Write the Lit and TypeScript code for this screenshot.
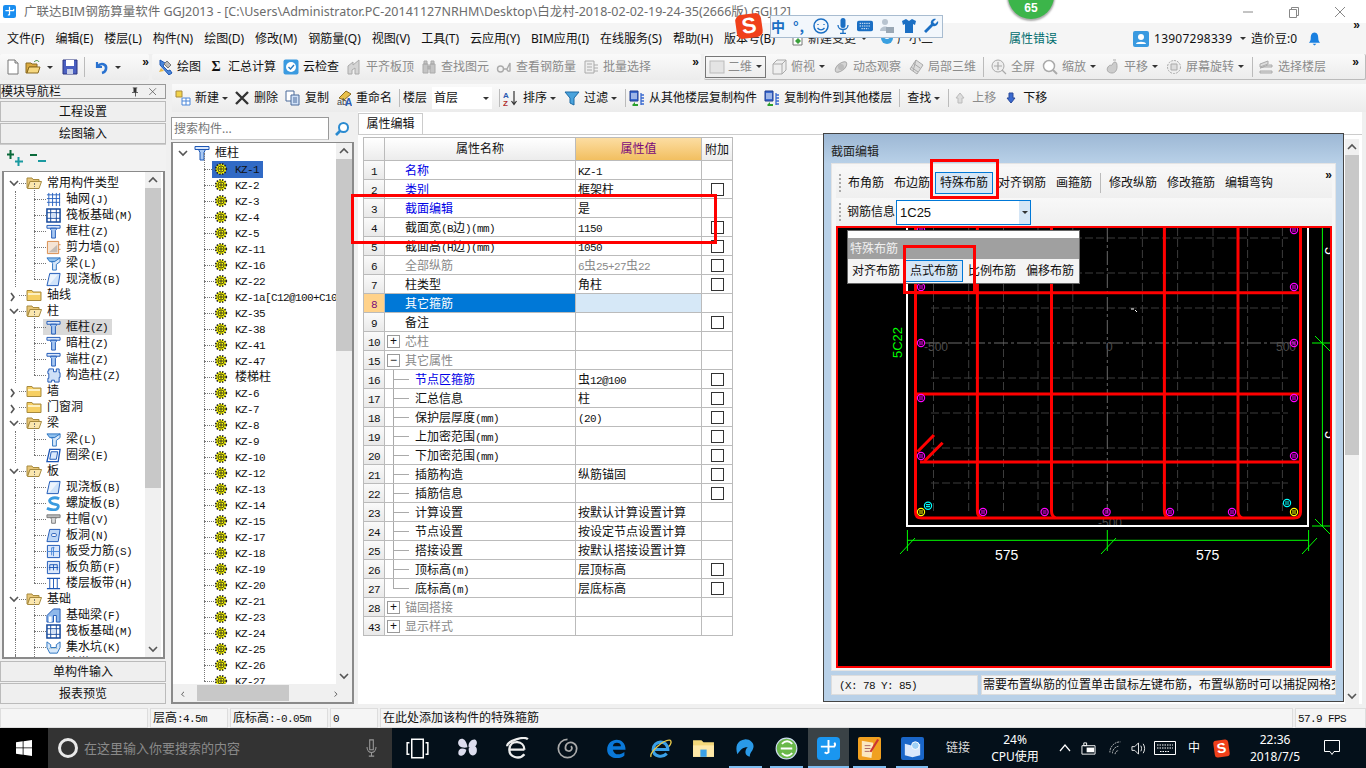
import { html, css, svg, LitElement } from 'lit';
import { customElement } from 'lit/decorators.js';

// latin runs in SimSun-style cells: 6px wide next to 12px CJK
const st = (s: string) =>
  s.split(/([\x20-\x7e]+)/).map((p, i) => (i % 2 ? html`<span class="la">${p}</span>` : p));

const B = '#1c56b5';
const P: Record<string, any> = {
  col: svg`<path d="M1 1.5h14v3H1z" fill="#dbe8fb" stroke="${B}"/><path d="M5 4.5h6V6l-1 1v8H6V7L5 6z" fill="#a9c9f3" stroke="${B}"/>`,
  folderO: svg`<path d="M1 3h5l1 1.5h6v2H4L1.5 13H1z" fill="#e8c778" stroke="#a78a3e"/><path d="M1.5 13.5L4 6.5h11.5L13 13.5z" fill="#fbe7ae" stroke="#a78a3e"/>`,
  folderC: svg`<path d="M1 3.5h5L7 5h8v8.5H1z" fill="#f6cf62" stroke="#a78a3e"/><path d="M2 6h12v2H2z" fill="#fdf0c0"/>`,
  axis: svg`<path d="M1 3h14M1 7h14M1 11h14M3 1v14M7 1v14M11 1v14M14.5 1v14" stroke="#2a62c0" fill="none"/>`,
  raft: svg`<path d="M1 1h14v14H1z" fill="#fff" stroke="#174a9c" stroke-width="1.6"/><path d="M1 5h14M1 11h14M5 1v14M11 1v14" stroke="#174a9c" fill="none"/><path d="M6 6h4v4H6z" fill="#cfe0f7"/>`,
  wall: svg`<path d="M1.5 1.5h12v13h-12z" fill="#f5e4d4" stroke="#d98a4a"/><path d="M3 13l9-8v8z" fill="#9a9a9a" opacity=".55"/><path d="M13.5 5h2M13.5 10h2" stroke="#d98a4a"/>`,
  beam: svg`<path d="M1 2h14l-3 4H4z" fill="#8fc0ee" stroke="#2a72c0"/><path d="M6 6h3l6-4v4l-4 3v6H7V8z" fill="#d7e8fa" stroke="#2a72c0"/>`,
  slab: svg`<path d="M4 1.5h11L13 14.5H1z" fill="#cfe3fa" stroke="${B}"/><path d="M4.5 3h8L4 13H2.5z" fill="#fff" opacity=".6"/>`,
  ring: svg`<path d="M4 1.5h11L13 14.5H1z" fill="#fff" stroke="${B}" stroke-width="1.4"/><path d="M5.5 4h7L11 12H4z" fill="#dbe8fb" stroke="${B}"/>`,
  puzzle: svg`<path d="M3 1h5v3h3V1h3v4h1v5h-1v5H9v-2H6v2H2v-4h1V6H2V3h1z" fill="#cfe0f7" stroke="${B}"/>`,
  spiral: svg`<path d="M14 3C8 0 1 4 5 7s9 1 8 5-8 3-12 1" fill="none" stroke="#3a9be0" stroke-width="3"/>`,
  cap: svg`<path d="M1 3h14v3H1z" fill="#bbb" stroke="#777"/><path d="M5 6h6l-1 2v4H6V8z" fill="#ddd" stroke="#777"/>`,
  hole: svg`<path d="M4 1.5h11L13 14.5H1z" fill="#bcd7f6" stroke="${B}"/><rect x="6" y="6" width="5" height="3" rx="1" fill="#fff" stroke="${B}"/>`,
  rebar: svg`<path d="M1.5 1.5h13v13h-13z" fill="#dbe8fb" stroke="${B}"/><path d="M1 8h14M8 3v10" stroke="#4a86d8"/><path d="M9 4h-3v8" stroke="#4a86d8" fill="none"/>`,
  neg: svg`<path d="M1.5 1.5h13v13h-13z" fill="#dbe8fb" stroke="${B}"/><path d="M3 8h10M4 5h8v6M4 5v6M8 5v6" stroke="${B}" fill="none"/>`,
  band: svg`<path d="M1 2.5h14M1 13.5h14" stroke="${B}" stroke-width="1.5"/><path d="M4 3v10M8 3v10M12 3v10" stroke="${B}"/>`,
  fbeam: svg`<path d="M1 15V8l7-7h7v14h-4V8H8v7z" fill="#8fb8ea" stroke="${B}"/><path d="M3 15V9h3v6z" fill="#fff"/>`,
  pit: svg`<path d="M1 2l4 3v3h6V5l4-3v6l-3 6H4L1 8z" fill="#d7e8fa" stroke="#2a72c0"/><path d="M3 9h10" stroke="#8aa" stroke-dasharray="1 1"/>`,
  stud: svg`<path d="M3 4h10v3H3z M6 7h4v8H6z" fill="#cfe0f7" stroke="${B}"/>`,
  gear: svg`<circle cx="8" cy="8" r="6" fill="#ff0" stroke="#222" stroke-width="2" stroke-dasharray="1.6 1.6"/><circle cx="8" cy="8" r="3.6" fill="#ff0" stroke="#222"/><path d="M5 8h6M8 5v6" stroke="#222"/>`,
  newdoc: svg`<path d="M3 1h7l3 3v11H3z" fill="#fff" stroke="#777"/><path d="M10 1v3h3" fill="#ddd" stroke="#777"/>`,
  open: svg`<path d="M1 4h5l1 1h5v3H4l-2 6H1z" fill="#d9a93f" stroke="#8a6a20"/><path d="M2 14l2-6h11l-2 6z" fill="#f6d880" stroke="#8a6a20"/><path d="M9 3c2-2 4-2 5 0" fill="none" stroke="#3a8a3a"/>`,
  save: svg`<path d="M1 1h14v14H1z" fill="#4a5fc0" stroke="#2a3580"/><path d="M4 1h8v6H4z" fill="#fff"/><path d="M5 10h6v5H5z" fill="#c8d0e8"/>`,
  undo: svg`<path d="M4 3v5h5" fill="none" stroke="#2a72d0" stroke-width="2.2"/><path d="M4.5 7.5C8 3 14 5 13 10c-.4 2-2 3.5-4 4" fill="none" stroke="#2a72d0" stroke-width="2.6"/>`,
  draw: svg`<path d="M3 1l5 3-2 3 5 5 2-1 2 3-3 2-9-10z" fill="#4a86d8" stroke="#1c56b5"/><path d="M2 13l5-1-3-3z" fill="#e8b94a"/><path d="M10 2l4 4-3 3-4-4z" fill="#bbb" stroke="#777"/>`,
  cloud: svg`<rect x="0.500" y="0.500" width="15" height="15" rx="2" fill="#3a9ae0"/><circle cx="8" cy="8" r="5" fill="#fff"/><path d="M5.500 8l2 2 3.500-4" fill="none" stroke="#2a7ac0" stroke-width="1.4"/>`,
  dAlign: svg`<path d="M2 15V7l5-4v3l6-5v14H9V9l-3 2v4z" fill="#d4d4d4" stroke="#aaa"/>`,
  dFind: svg`<path d="M2 5h5v9H2zM9 5h5v9H9zM3 2h3v3H3zM10 2h3v3h-3zM7 7h2v3H7z" fill="#c4c4c4" stroke="#aaa"/>`,
  dView: svg`<circle cx="4.5" cy="10" r="3" fill="none" stroke="#aaa" stroke-width="1.4"/><path d="M8 10h3M11 10l3-6v8a2 2 0 01-3-2" fill="none" stroke="#aaa" stroke-width="1.4"/>`,
  dBatch: svg`<path d="M2 2h9v12H2z" fill="#eee" stroke="#aaa"/><path d="M4 5h5M4 8h5M4 11h5M11 6h4M11 9h4M11 12h4" stroke="#aaa"/>`,
  dBox: svg`<path d="M2 5l4-4h9v10l-4 4H2z" fill="#eee" stroke="#aaa"/><path d="M2 5h9v10M11 5l4-4" fill="none" stroke="#aaa"/>`,
  dOrbit: svg`<ellipse cx="8" cy="8" rx="7" ry="3.5" transform="rotate(-40 8 8)" fill="#d4d4d4" stroke="#aaa"/><circle cx="8" cy="8" r="3" fill="#bbb"/>`,
  dCube: svg`<path d="M8 1l7 5-6 9-7-5z" fill="#ddd" stroke="#aaa"/><path d="M5 4l7 5M3 8l7 5M8 1L5 12" stroke="#aaa"/>`,
  dFull: svg`<circle cx="7" cy="7" r="6" fill="#eee" stroke="#aaa"/><path d="M7 3v8M3 7h8M11 11l4 4" stroke="#aaa" stroke-width="1.2"/>`,
  dZoom: svg`<circle cx="7" cy="7" r="5.5" fill="#fff" stroke="#aaa" stroke-width="1.5"/><path d="M11 11l4 4" stroke="#aaa" stroke-width="2"/>`,
  dPan: svg`<path d="M4 8c2-3 3-1 4-2s1-3 3-3 2 3 2 5-1 6-5 6-6-3-4-6z" fill="#ccc" stroke="#aaa"/><path d="M9 1h3" stroke="#aaa"/>`,
  dRot: svg`<circle cx="8" cy="8" r="6.5" fill="#eee" stroke="#aaa" stroke-dasharray="2 1"/><path d="M5 5h6v6H5z" fill="#ddd" stroke="#aaa"/>`,
  dFloor: svg`<path d="M2 5l8-3v3l-8 3zM2 9l8-3h4v2H6zM2 12h12v2H2z" fill="#ddd" stroke="#aaa"/>`,
  d2: svg`<rect x="1" y="2" width="14" height="12" fill="#e4e4e4" stroke="#bbb"/>`,
  add: svg`<path d="M1 1h6v6H1z" fill="#f2d34a" stroke="#a78a3e"/><path d="M7 8h8v7H7z" fill="#fff" stroke="#4a86d8"/><path d="M7 11h8M11 8v7" stroke="#4a86d8"/>`,
  del: svg`<path d="M2 2l12 12M14 2L2 14" stroke="#333" stroke-width="2.4"/>`,
  copy: svg`<path d="M1 1h8v10H1z" fill="#fff" stroke="#4a6a9a"/><path d="M6 5h8v10H6z" fill="#cfe0f7" stroke="#4a6a9a"/><path d="M8 8h4M8 10h4M8 12h4" stroke="#4a6a9a"/>`,
  rename: svg`<path d="M3 8l7-7 5 3-7 6z" fill="#e8c04a" stroke="#8a6a20"/><text x="1" y="15" font-size="9" fill="#444" font-family="Liberation Sans">ab</text><text x="9" y="16" font-size="10" font-weight="700" fill="#2a5ab0" font-family="Liberation Sans">A</text>`,
  sort: svg`<text x="0" y="7.5" font-size="8" font-weight="700" fill="#2a5ab0" font-family="Liberation Sans">A</text><text x="0" y="15.5" font-size="8" font-weight="700" fill="#b03030" font-family="Liberation Sans">Z</text><path d="M11 1v13M8.5 11l2.5 3.5 2.5-3.5" fill="none" stroke="#333" stroke-width="1.2"/>`,
  filter: svg`<path d="M1 2h14l-5 6v7l-4-2V8z" fill="#4aa3dc" stroke="#1c6aa5"/>`,
  fromF: svg`<path d="M1 1h8v10H1z" fill="#3a6ad0" stroke="#1c3a90"/><path d="M2 4h6M2 6h6M2 8h6" stroke="#fff"/><path d="M12 5h3M12 8h3M12 11h3M12 14h3M12 3v12" stroke="#3a6ad0" stroke-width="1.3"/><path d="M3 15l3-3v2h3v2H6v2z" fill="#2ca02c"/>`,
  up: svg`<path d="M8 3l4 5h-2v5H6V8H4z" fill="#ddd" stroke="#bbb"/>`,
  down: svg`<path d="M8 13L4 8h2V3h4v5h2z" fill="#3a6ad0" stroke="#2a4a9a"/>`,
  search: svg`<circle cx="9.5" cy="6.5" r="4.5" fill="#fff" stroke="#2a8ad0" stroke-width="2"/><path d="M6 10l-4 4" stroke="#2a8ad0" stroke-width="2.6"/>`,
  plus: svg`<path d="M3.500 0v9M0 4.500h7" stroke="#0a6a3a" stroke-width="2"/><path d="M11.500 7v9M8 11.500h8" stroke="#1a9aa0" stroke-width="2"/>`,
  minus: svg`<path d="M0 5h7" stroke="#0a6a3a" stroke-width="2"/><path d="M8 11h8" stroke="#1a9aa0" stroke-width="2"/>`,
  pin: svg`<path d="M5 2h6v1h-1v5h2v1H9v5H8V9H4V8h2V3H5z" fill="#333"/>`,
  x: svg`<path d="M3 3l9 9M12 3l-9 9" stroke="#555" fill="none"/>`,
  doc: svg`<path d="M3 2h9v12H3z" fill="#fff" stroke="#777"/><path d="M5 10l3-3 3 3-3 3z" fill="#3aa03a"/>`,
  cup: svg`<path d="M2 3h12v4a6 6 0 01-12 0z" fill="#3aa0e0"/><path d="M5 6c1 2 5 2 6 0" fill="none" stroke="#fff"/>`,
  user: svg`<rect x="1" y="1" width="16" height="16" rx="2" fill="#3a9ae0"/><circle cx="9" cy="7" r="3" fill="#fff"/><path d="M4 14c0-3 10-3 10 0z" fill="#fff"/>`,
  bell: svg`<path d="M8 1c3 0 4 3 4 6s1 4 2 5H2c1-1 2-2 2-5s1-6 4-6z" fill="#1a80e0"/><path d="M6 13h4l-2 2z" fill="#1a80e0"/>`,
};
const ic = (n: string) => html`<svg class="ic" viewBox="0 0 16 16">${P[n]}</svg>`;
const arrow = html`<i class="arr"></i>`;
const more = html`<span class="more">»</span>`;
const chev = (d: string) =>
  html`<svg class="chev" viewBox="0 0 10 6"><path d="${d}" fill="none" stroke="#555" stroke-width="1.6"/></svg>`;
const CUP = 'M1 5l4-4 4 4';
const CDN = 'M1 1l4 4 4-4';

type T = [string, string, boolean?];
const row1: T[] = [['draw', '绘图'], ['sig', '汇总计算'], ['cloud', '云检查']];
const row1d: T[] = [['dAlign', '平齐板顶'], ['dFind', '查找图元'], ['dView', '查看钢筋量'], ['dBatch', '批量选择']];

type N = [number, string, string, string?];
// level, icon, label, selected
const navTree: N[] = [
  [0, 'folderO', '常用构件类型'], [1, 'axis', '轴网(J)'], [1, 'raft', '筏板基础(M)'], [1, 'col', '框柱(Z)'],
  [1, 'wall', '剪力墙(Q)'], [1, 'beam', '梁(L)'], [1, 'slab', '现浇板(B)'], [0, 'folderC', '轴线'],
  [0, 'folderO', '柱'], [1, 'col', '框柱(Z)', 's'], [1, 'col', '暗柱(Z)'], [1, 'col', '端柱(Z)'], [1, 'puzzle', '构造柱(Z)'],
  [0, 'folderC', '墙'], [0, 'folderC', '门窗洞'], [0, 'folderO', '梁'], [1, 'beam', '梁(L)'], [1, 'ring', '圈梁(E)'],
  [0, 'folderO', '板'], [1, 'slab', '现浇板(B)'], [1, 'spiral', '螺旋板(B)'], [1, 'cap', '柱帽(V)'], [1, 'hole', '板洞(N)'],
  [1, 'rebar', '板受力筋(S)'], [1, 'neg', '板负筋(F)'], [1, 'band', '楼层板带(H)'], [0, 'folderO', '基础'],
  [1, 'fbeam', '基础梁(F)'], [1, 'raft', '筏板基础(M)'], [1, 'pit', '集水坑(K)'], [1, 'stud', '柱墩(Y)'],
];
const kz = ['KZ-1', 'KZ-2', 'KZ-3', 'KZ-4', 'KZ-5', 'KZ-11', 'KZ-16', 'KZ-22', 'KZ-1a[C12@100+C10', 'KZ-35', 'KZ-38', 'KZ-41',
  'KZ-47', '楼梯柱', 'KZ-6', 'KZ-7', 'KZ-8', 'KZ-9', 'KZ-10', 'KZ-12', 'KZ-13', 'KZ-14', 'KZ-15', 'KZ-17', 'KZ-18', 'KZ-19',
  'KZ-20', 'KZ-21', 'KZ-23', 'KZ-24', 'KZ-25', 'KZ-26', 'KZ-27'];

// no, name, value, checkbox, style: b blue, g grey, s selected, sub child row, + / - expander
const rows: [string, string, string, boolean, string][] = [
  ['1', '名称', 'KZ-1', false, 'b'], ['2', '类别', '框架柱', true, 'b'], ['3', '截面编辑', '是', false, 'b'],
  ['4', '截面宽(B边)(mm)', '1150', true, ''], ['5', '截面高(H边)(mm)', '1050', true, ''],
  ['6', '全部纵筋', '6虫25+27虫22', true, 'g'], ['7', '柱类型', '角柱', true, ''], ['8', '其它箍筋', '', false, 's'],
  ['9', '备注', '', true, ''], ['10', '芯柱', '', false, 'g +'], ['15', '其它属性', '', false, 'g -'],
  ['16', '节点区箍筋', '虫12@100', true, 'b sub'], ['17', '汇总信息', '柱', true, 'sub'], ['18', '保护层厚度(mm)', '(20)', true, 'sub'],
  ['19', '上加密范围(mm)', '', true, 'sub'], ['20', '下加密范围(mm)', '', true, 'sub'], ['21', '插筋构造', '纵筋锚固', true, 'sub'],
  ['22', '插筋信息', '', true, 'sub'], ['23', '计算设置', '按默认计算设置计算', false, 'sub'], ['24', '节点设置', '按设定节点设置计算', false, 'sub'],
  ['25', '搭接设置', '按默认搭接设置计算', false, 'sub'], ['26', '顶标高(m)', '层顶标高', true, 'sub'], ['27', '底标高(m)', '层底标高', true, 'sub last'],
  ['28', '锚固搭接', '', false, 'g +'], ['43', '显示样式', '', false, 'g +'],
];

const gx = [933.5, 968.7, 1003.5, 1038, 1072.8, 1142.4, 1177.6, 1213, 1247.6, 1282.4];
const gy = [238, 273, 308, 378, 413, 448, 483];
const vbars = [977.4, 1051.5, 1164.4, 1238];
const bars: [number, number, string][] = [
  [921, 230, '#f0f'], [1294, 230, '#f0f'], [921, 287, '#f0f'], [1294, 287, '#f0f'], [921, 343, '#f0f'], [1294, 343, '#f0f'],
  [921, 398, '#f0f'], [1294, 398, '#f0f'], [921, 456, '#f0f'], [1294, 456, '#f0f'], [983, 512, '#f0f'], [1044.6, 512, '#f0f'],
  [1106.6, 512, '#f0f'], [1170, 512, '#f0f'], [1232, 512, '#f0f'], [921, 512, '#ff0'], [1294, 512, '#ff0'],
  [928, 505.7, '#0ff'], [1287, 503, '#0ff'],
];

@customElement('app-root')
export class AppRoot extends LitElement {
  private drawing() {
    return html`<svg class="cad" viewBox="836 226 496 442">
      <g stroke="#3c3c3c" stroke-dasharray="8 3" fill="none">
        ${gx.map((x) => svg`<path d="M${x} 228V513"/>`)}
        ${gy.map((y) => svg`<path d="M931 ${y}H1288"/>`)}
        <path d="M1107.3 228V513M925 343H1295" stroke="#6a6a6a" stroke-dasharray="14 3 3 3"/>
      </g>
      <g fill="#4c4c4c" font-family="Liberation Sans" font-size="12">
        <text x="924" y="351">-500</text><text x="1106" y="351">0</text><text x="1276" y="351">500</text><text x="1098" y="527">-500</text>
      </g>
      <path d="M907 220V526H1308V220" fill="none" stroke="#fff" stroke-width="2"/>
      <g stroke="#f00" stroke-width="3" fill="none">
        <path d="M915.5 226V512q0 6 6 6H1294q6.500 0 6.500-6V226"/>
        ${vbars.map((x) => svg`<path d="M${x} 226V511q0 5 4 7"/>`)}
        <path d="M916 292.700H1299M916 394H1299M920 462H1299"/>
        <path d="M917.500 451.700L934 435M924.500 461L942.600 442.700"/>
      </g>
      ${bars.map(([x, y, c]) => svg`<g fill="none" stroke="${c}" stroke-width="1.2"><circle cx="${x}" cy="${y}" r="3.600"/><path d="M${x - 2} ${y - 1}h4M${x - 2} ${y + 1}h4"/></g>`)}
      <g stroke="#0f0" fill="none">
        <path d="M907.400 540.300H1308.600M907.400 530V551M1107.300 530V551M1308.600 530V551"/>
        <path d="M900 554L915 538M1101 554L1116 538M1302 554L1317 538"/>
        <path d="M1322.400 226V526M1312 526H1332M1312 343H1332M1315 336L1330 351M1315 519L1330 534"/>
      </g>
      <g fill="#fff" font-family="Liberation Sans" font-size="14">
        <text x="995" y="560">575</text><text x="1196" y="560">575</text>
        <text transform="translate(1325 247) rotate(90)">5</text><text transform="translate(1325 431) rotate(90)">5</text>
      </g>
      <text transform="translate(902 358) rotate(-90)" fill="#0f0" font-family="Liberation Sans" font-size="13">5C22</text>
      <path d="M1131 309h3M1135 310l2 2" stroke="#fff"/>
    </svg>`;
  }

  private task(cls: string, body: any) {
    return html`<div class="slot ${cls}">${body}</div>`;
  }

  render() {
    return html`
      <div class="title">
        <svg class="appic" viewBox="0 0 16 16"><rect width="16" height="16" rx="2.500" fill="#1a8ef0"/><path d="M8 2v10a2 2 0 01-2 0M3 7h10a2 2 0 000-2" fill="none" stroke="#fff" stroke-width="1.500"/></svg>
        <span class="ttxt">广联达BIM钢筋算量软件 GGJ2013 - [C:\\Users\\Administrator.PC-20141127NRHM\\Desktop\\白龙村-2018-02-02-19-24-35(2666版).GGJ12]</span>
        <div class="wc">
          <svg viewBox="0 0 12 12"><path d="M1 6h10" stroke="#888"/></svg>
          <svg viewBox="0 0 12 12"><path d="M1.500 3.500h7v8h-7zM3.500 3.500v-2h7v8h-2" fill="none" stroke="#888"/></svg>
          <svg viewBox="0 0 12 12"><path d="M1 1l10 10M11 1L1 11" stroke="#888"/></svg>
        </div>
      </div>

      <div class="menu">
        ${['文件(F)', '编辑(E)', '楼层(L)', '构件(N)', '绘图(D)', '修改(M)', '钢筋量(Q)', '视图(V)', '工具(T)', '云应用(Y)', 'BIM应用(I)', '在线服务(S)', '帮助(H)', '版本号(B)'].map((m) => html`<span>${m}</span>`)}
        <span class="mi first">${ic('doc')}新建变更</span><i class="arr"></i>
        <span class="mi">${ic('cup')}广小二</span>
        <span class="err">属性错误</span>
        <span class="acct"><svg class="ic" viewBox="0 0 18 18">${P.user}</svg>13907298339<i class="arr"></i></span>
        <span class="bean">造价豆:0</span>
        <span class="bell">${ic('bell')}</span>
        ${more}
      </div>

      <div class="tools">
        <div class="seg a">
          ${ic('newdoc')}${ic('open')}${arrow}<span class="sp"></span>${ic('save')}<b class="sep"></b>${ic('undo')}${arrow}${more}
        </div>
        <div class="seg b">
          ${row1.map(([i, t]) => html`<span class="it">${i === 'sig' ? html`<span class="sig">Σ</span>` : ic(i)}${t}</span>`)}
          ${row1d.map(([i, t]) => html`<span class="it off">${ic(i)}${t}</span>`)}
          ${more}
        </div>
        <div class="seg c">
          <span class="combo2">${ic('d2')}<span>二维</span>${arrow}</span>
          <span class="it off">${ic('dBox')}俯视${arrow}</span>
          <span class="it off">${ic('dOrbit')}动态观察</span>
          <span class="it off">${ic('dCube')}局部三维</span>
          <b class="sep"></b>
          <span class="it off">${ic('dFull')}全屏</span>
          <span class="it off">${ic('dZoom')}缩放${arrow}</span>
          <span class="it off">${ic('dPan')}平移${arrow}</span>
          <span class="it off">${ic('dRot')}屏幕旋转${arrow}</span>
          <b class="sep tight"></b>
          <span class="it off floor">${ic('dFloor')}选择楼层</span>
          ${more}
        </div>
      </div>

      <div class="main">
        <div class="nav">
          <div class="navhead"><span>模块导航栏</span>${ic('pin')}${ic('x')}</div>
          <div class="btn">工程设置</div>
          <div class="btn">绘图输入</div>
          <div class="strip">${ic('plus')}${ic('minus')}</div>
          <div class="pane navtree">
            <div class="list">
              ${navTree.map(([l, i, t, s]) => html`<div class="node l${l}">
                ${s ? html`<i class="selbg"></i>` : ''}
                ${l === 0
                  ? html`<span class="tog">${chev(i === 'folderO' ? CDN : 'M2 1l3 4-3 4')}</span><i class="dot h"></i>`
                  : html`<i class="dot h child"></i>`}
                ${ic(i)}<span class="lb">${st(t)}</span></div>`)}
            </div>
            <div class="vs nv"><div class="end">${chev(CUP)}</div><div class="track"><div class="th"></div></div><div class="end">${chev(CDN)}</div></div>
          </div>
          <div class="btn foot">单构件输入</div>
          <div class="btn">报表预览</div>
        </div>

        <div class="split">
          <div class="tb2">
            <span class="it">${ic('add')}新建${arrow}</span>
            <span class="it x">${ic('del')}删除</span>
            <span class="it">${ic('copy')}复制</span>
            <span class="it">${ic('rename')}重命名</span>
            <b class="sep"></b>
            <span class="fl">楼层</span>
            <span class="combo3">首层${arrow}</span>
            <b class="sep"></b>
            <span class="it">${ic('sort')}排序${arrow}</span>
            <span class="it">${ic('filter')}过滤${arrow}</span>
            <b class="sep"></b>
            <span class="it">${ic('fromF')}从其他楼层复制构件</span>
            <span class="it">${ic('fromF')}复制构件到其他楼层</span>
            <b class="sep"></b>
            <span class="it find">查找${arrow}</span>
            <b class="sep"></b>
            <span class="it off">${ic('up')}上移</span>
            <span class="it">${ic('down')}下移</span>
          </div>
          <div class="work">
            <div class="comp">
              <div class="srow"><div class="sbox">搜索构件...</div>${ic('search')}</div>
              <div class="pane ctree">
                <div class="clist">
                  <div class="croot"><span class="tog">${chev(CDN)}</span>${ic('col')}<span>框柱</span></div>
                  ${kz.map((k, i) => html`<div class="cn"><i class="dot h"></i>${ic('gear')}<span class="lb ${i === 0 ? 'hl' : ''}">${st(k)}</span></div>`)}
                </div>
                <div class="vs cv"><div class="end">${chev(CUP)}</div><div class="track"><div class="th"></div></div><div class="end">${chev(CDN)}</div></div>
                <div class="hs"><span>${chev('M5 1L1 5l4 4')}</span><div class="hth"></div><span class="he">${chev('M1 1l4 4-4 4')}</span></div>
              </div>
            </div>

            <div class="props">
              <div class="tab">属性编辑</div>
              <div class="body">
                <div class="grid">
                  <div class="row head"><div class="c n"></div><div class="c nm">属性名称</div><div class="c vl">属性值</div><div class="c ad">附加</div></div>
                  ${rows.map(([no, name, val, cb, f]) => {
                    const fl = f.split(' ');
                    const exp = fl.includes('+') ? '+' : fl.includes('-') ? '−' : '';
                    return html`<div class="row ${f}">
                      <div class="c n">${st(no)}</div>
                      <div class="c nm">${exp ? html`<span class="ex">${exp}</span>` : ''}${st(name)}</div>
                      <div class="c vl">${st(val)}</div>
                      <div class="c ad">${cb ? html`<i class="cb"></i>` : ''}</div>
                    </div>`;
                  })}
                </div>
                <div class="vs rv"><div class="end">${chev(CUP)}</div><div class="track"><div class="th"></div></div><div class="end">${chev(CDN)}</div></div>
              </div>
            </div>
          </div>
        </div>
      </div>

      <div class="status">
        <div class="st s0"></div>
        <div class="st s1">${st('层高:4.5m')}</div>
        <div class="st s2">${st('底标高:-0.05m')}</div>
        <div class="st s3">${st('0')}</div>
        <div class="st s4">在此处添加该构件的特殊箍筋</div>
        <div class="st s5">${st('57.9 FPS')}</div>
      </div>

      <div class="taskbar">
        <div class="start"><svg viewBox="0 0 16 16"><path d="M0 2.300L6.700 1.300V7.500H0zM7.500 1.200L16 0V7.500H7.500zM0 8.300H6.700V14.700L0 13.700zM7.500 8.300H16V16L7.500 14.800z" fill="#fff"/></svg></div>
        <div class="sbar">
          <i class="cortana"></i><span>在这里输入你要搜索的内容</span>
          <svg class="mic" viewBox="0 0 12 20"><path d="M4 1h4v11H4zM1 9c0 8 10 8 10 0M6 15v4M3 19h6" fill="none" stroke="#999" stroke-width="1.200"/></svg>
        </div>
        ${this.task('w50', html`<svg viewBox="0 0 20 20"><path d="M5 2h10v16H5zM3 5H1v10h2M17 5h2v10h-2" fill="none" stroke="#fff" stroke-width="1.300"/></svg>`)}
        ${this.task('w50', html`<svg viewBox="0 0 20 20"><path d="M10 9C5 10 1 8 2 4s7-4 8 5zM11 10c5-5 8-1 7 3s-7 5-7-3zM9 11c-1 6-7 7-7 3s3-5 7-3zM11 9c-1-6 6-9 7-5s-3 6-7 5z" fill="#dde"/></svg>`)}
        ${this.task('w50', html`<svg viewBox="0 0 20 20"><path d="M3 11h13M16 11c0-8-12-9-13-1s9 10 13 5M1 8c0-5 15-9 18-6" fill="none" stroke="#eee" stroke-width="2"/></svg>`)}
        ${this.task('w50', html`<svg viewBox="0 0 20 20"><path d="M10 2a8 8 0 108 8c0-4-4-6-7-5s-4 6-1 7 5-2 3-4" fill="none" stroke="#aaa" stroke-width="1.500"/></svg>`)}
        ${this.task('w50', html`<svg viewBox="0 0 20 20"><path d="M3 11h14c0-12-16-11-16 0 0 8 11 9 15 5v-3c-4 3-9 3-10-2" fill="#0a78d8"/><path d="M6 8c0-4 7-4 7 0z" fill="#041018"/></svg>`)}
        ${this.task('w36', html`<svg viewBox="0 0 22 20"><path d="M5 11h13c0-10-14-9-14 0 0 7 9 8 13 4" fill="none" stroke="#3aa0e8" stroke-width="3"/><path d="M2 18C0 14 14 1 20 2c2 1 1 4-1 6" fill="none" stroke="#e8c84a" stroke-width="1.300"/></svg>`)}
        ${this.task('w50', html`<svg viewBox="0 0 22 20"><path d="M1 2h8l2 2h10v14H1z" fill="#f4d87a"/><path d="M1 7h20v11H1z" fill="#ffe9a8"/><path d="M8 11h6v7H8z" fill="#3aa0e8"/></svg>`)}
        ${this.task('w35 u g6', html`<svg viewBox="0 0 20 20"><path d="M10 2c-8 1-9 7-7 13 3-4 4-6 9-6-3 2-3 8 2 8-1-3 3-5 3-9 0-3-3-6-7-6z" fill="#2a9ae8"/></svg>`)}
        ${this.task('w35 u g4', html`<svg viewBox="0 0 20 20"><circle cx="10" cy="10" r="9" fill="#6ab84a" stroke="#cde"/><path d="M5 10h10M6 6c3-3 6-3 9 0M6 14c3 3 6 3 9 0" fill="none" stroke="#fff" stroke-width="1.600"/></svg>`)}
        ${this.task('w41 act u', html`<svg viewBox="0 0 24 24"><rect width="24" height="24" rx="4" fill="#1a96f0"/><path d="M12 3v13a3 3 0 01-4 0M4 10h14a3 3 0 000-4" fill="none" stroke="#fff" stroke-width="2"/></svg>`)}
        ${this.task('w35 u g3l g8', html`<svg viewBox="0 0 24 24"><rect width="24" height="24" rx="2" fill="#f0a020"/><path d="M4 4l12 2-2 16-10-2z" fill="#fbe8c0"/><path d="M7 9h6M7 12h6M7 15h5" stroke="#a66"/><path d="M20 2l2 1-8 13-2-1z" fill="#c33"/></svg>`)}
        ${this.task('w34 u', html`<svg viewBox="0 0 24 24"><rect width="24" height="24" rx="2" fill="#1a66c8"/><path d="M4 7l8 2 8-2v12l-8 2-8-2z" fill="#dbe8fb"/><circle cx="15" cy="9" r="4" fill="#9fd0f5" stroke="#fff"/></svg>`)}
        <span class="link">链接</span>
        <div class="cpu"><span>24%</span><span>CPU使用</span></div>
        <svg class="tray t1" viewBox="0 0 12 8"><path d="M1 7l5-6 5 6" fill="none" stroke="#fff" stroke-width="1.200"/></svg>
        <svg class="tray t2" viewBox="0 0 16 16"><path d="M1 5h14v9H1zM3 2h3v3H3z" fill="none" stroke="#fff"/><path d="M6 7h8v5H6z" fill="#fff"/></svg>
        <svg class="tray t3" viewBox="0 0 16 16"><path d="M1 13a12 12 0 0112-12M4 14a8 8 0 017-8M7 15a4 4 0 014-4" fill="none" stroke="#ddd" stroke-dasharray="2 1"/></svg>
        <svg class="tray t4" viewBox="0 0 16 16"><path d="M1 6h3l4-4v12l-4-4H1zM10.500 5c1 2 1 4 0 6M13 3c2 3 2 7 0 10" fill="none" stroke="#eee"/></svg>
        <svg class="tray t5" viewBox="0 0 22 14"><path d="M.5.500h21v13H.500z" fill="none" stroke="#fff"/><path d="M3 4h16M3 7h16M6 10.500h10" stroke="#fff" stroke-dasharray="1.500 1"/></svg>
        <span class="zh">中</span>
        <span class="sg small">S</span>
        <div class="clock"><span>22:36</span><span>2018/7/5</span></div>
        <svg class="notif" viewBox="0 0 16 16"><path d="M.5.500h15v11H10l-2 3-2-3H.500z" fill="none" stroke="#fff"/></svg>
      </div>

      <div class="under">
        <div class="dlg">
          <div class="dtitle">截面编辑</div>
          <div class="dframe">
            <div class="dbar">
              <i class="grip"></i>
              <span>布角筋</span><span>布边筋</span><span class="on">特殊布筋</span><span>对齐钢筋</span><span>画箍筋</span>
              <b class="sep"></b>
              <span>修改纵筋</span><span>修改箍筋</span><span>编辑弯钩</span>
              ${more}
            </div>
            <div class="dbar r2">
              <i class="grip"></i><span>钢筋信息</span>
              <div class="rc">1C25<u>${arrow}</u></div>
            </div>
            <div class="canvas">${this.drawing()}</div>
          </div>
          <div class="dstat">
            <div class="xy">${st('(X: 78 Y: 85)')}</div>
            <div class="msg">需要布置纵筋的位置单击鼠标左键布筋，布置纵筋时可以捕捉网格交点</div>
          </div>
        </div>

        <div class="float">
          <div class="ftop"></div>
          <div class="ftitle">特殊布筋</div>
          <div class="fbody"><span>对齐布筋</span><span class="on">点式布筋</span><span>比例布筋</span><span>偏移布筋</span></div>
        </div>

        <i class="mark m1"></i><i class="mark m2"></i><i class="mark m3"></i>

        <div class="badge"><span>65</span></div>

        <div class="ime">
          <span class="sg">S</span>
          <div class="imebar">
            <b>中</b><b class="pn">°,</b>
            <svg viewBox="0 0 16 16"><circle cx="8" cy="8" r="7" fill="none" stroke="#1a6fc4" stroke-width="1.500"/><path d="M5 6v1M11 6v1M4.500 10c2 2.500 5 2.500 7 0" fill="none" stroke="#1a6fc4" stroke-width="1.300"/></svg>
            <svg viewBox="0 0 16 16"><rect x="5.500" y="0" width="5" height="10" rx="2.500" fill="#1a6fc4"/><path d="M3 7c0 6 10 6 10 0M8 12v3M5 15.500h6" fill="none" stroke="#1a6fc4" stroke-width="1.300"/></svg>
            <svg viewBox="0 0 18 16"><rect y="2" width="18" height="12" rx="2" fill="#1a6fc4"/><path d="M3 5h12M3 8h12M5 11h8" stroke="#fff" stroke-dasharray="1.500 1"/></svg>
            <svg viewBox="0 0 16 16"><circle cx="6" cy="4" r="3" fill="#b8c4d0"/><path d="M1 13c0-6 10-6 10 0z" fill="#b8c4d0"/><path d="M7 9h8v6H7z" fill="#9aa8b5"/></svg>
            <svg viewBox="0 0 16 16"><path d="M5 1L1 3l1 4 2-1v9h8V6l2 1 1-4-4-2-3 2z" fill="#1a6fc4"/></svg>
            <svg viewBox="0 0 16 16"><path d="M15 3l-3 3-2-2 3-3c-3-1-6 2-5 5l-7 7 2 2 7-7c3 1 6-2 5-5z" fill="#1a6fc4"/></svg>
          </div>
        </div>
      </div>
    `;
  }

  static styles = css`
    :host {
      display: block;
      position: relative;
      width: 1366px;
      height: 768px;
      overflow: hidden;
      background: #f0f0f0;
      color: #111;
      font: 12px/16px "Noto Sans", "Noto Sans CJK SC", sans-serif;
    }
    .la { font: 11px/16px "Liberation Mono", monospace; letter-spacing: -0.6px; }
    .ic { width: 16px; height: 16px; flex: none; display: block; }
    .arr { width: 0; height: 0; border: 3px solid transparent; border-top: 3px solid #333; border-bottom: 0; margin-right: 1px; flex: none; display: block; }
    .more { font: 700 12px/12px "Liberation Sans", sans-serif; margin-left: auto; align-self: flex-start; padding-top: 2px; }
    .sep { width: 1px; height: 20px; background: #bbb; flex: none; }
    .chev { width: 10px; height: 6px; display: block; overflow: visible; }

    .title { height: 23px; background: #fff; display: flex; align-items: center; padding-left: 3px; color: #6c6c6c; }
    .appic { width: 13px; height: 13px; margin-right: 8px; }
    .ttxt { font-size: 12.500px; white-space: nowrap; }
    .wc { margin-left: auto; display: flex; gap: 34px; padding-right: 20px; }
    .wc svg { width: 12px; height: 12px; }

    .menu { height: 31px; background: #f5f5f5; display: flex; align-items: center; gap: 11px; padding: 0 6px 0 7px; white-space: nowrap; }
    .mi { display: flex; align-items: center; gap: 2px; color: #222; }
    .mi.first { margin-left: 4px; }
    .menu > .arr { margin-left: -6px; }
    .err { color: #006d6d; margin-left: 65px; width: 112px; }
    .acct { display: flex; align-items: center; gap: 4px; width: 108px; letter-spacing: 0.25px; }
    .acct .ic { width: 18px; height: 18px; }
    .acct .arr { margin-left: 4px; }
    .bell .ic { width: 15px; height: 18px; }
    .bell { margin-left: -1px; }
    .menu .more { margin-top: -6px; }

    .tools { height: 30px; display: flex; gap: 3px; align-items: stretch; background: #f0f0f0; }
    .seg { height: 26px; display: flex; align-items: center; background: linear-gradient(#fafafa, #ececec); border-radius: 2px; box-sizing: border-box; }
    .seg.a { width: 149px; padding-left: 5px; gap: 4px; }
    .seg.a .sep { margin: 0 4px 0 2px; }
    .seg.a .arr { margin-left: 2px; }
    .seg.b { width: 549px; padding: 0 2px 0 5px; gap: 7px; }
    .seg.c { flex: 1; padding: 0 6px 0 1px; gap: 7px; }
    .sep.tight { margin-right: -2px; }
    .floor { gap: 1px; }
    .it { display: flex; align-items: center; gap: 4px; white-space: nowrap; }
    .off { color: #8b8b8b; }
    .sig { width: 16px; text-align: center; font: 700 14px/16px "Liberation Serif", serif; }
    .combo2 { width: 61px; height: 22px; border: 1px solid #777; display: flex; align-items: center; gap: 3px; padding-left: 3px; color: #8b8b8b; box-sizing: border-box; margin-right: -2px; }
    .combo2 .arr { margin-left: auto; margin-right: 3px; }

    .main { display: flex; height: 620px; }
    .nav { width: 166px; flex: none; display: flex; flex-direction: column; }
    .navhead { height: 15px; border: 1px solid #999; box-sizing: border-box; display: flex; align-items: center; font-size: 12px; line-height: 13px; overflow: hidden; }
    .navhead span { flex: 1; }
    .navhead .ic { width: 12px; height: 12px; margin-right: 6px; }
    .btn { height: 21px; margin-top: 1px; background: #efefef; border: 1px solid #bbb; box-sizing: border-box; text-align: center; line-height: 19px; flex: none; }
    .navhead + .btn { margin-top: 2px; }
    .btn.foot { margin-top: 2px; }
    .strip { height: 27px; display: flex; align-items: center; gap: 7px; padding-left: 7px; background: #f2f2f2; border-top: 1px solid #ccc; box-sizing: border-box; flex: none; }
    .pane { border: 1px solid #8a8a8a; border-width: 1px 2px 2px; background: #fff; box-sizing: border-box; position: relative; overflow: hidden; }
    .navtree { margin: 0 1px 0 2px; flex: 1; min-height: 0; display: flex; }
    .list { flex: 1; min-width: 0; overflow: hidden; padding-top: 3px; isolation: isolate; }
    .node { height: 16px; display: flex; align-items: center; white-space: nowrap; position: relative; }
    .node.l0 { padding-left: 5px; }
    .node.l0 .lb { margin-left: 5px; }
    .node.l1 { padding-left: 30px; }
    .node.l1 .ic { width: 15px; height: 15px; }
    .node.l1 .lb { margin-left: 5px; }
    .node.l1::before { content: ""; position: absolute; left: 30px; top: -8px; height: 16px; border-left: 1px dotted #777; }
    .node.l1::after { content: ""; position: absolute; left: 11px; top: 0; height: 16px; border-left: 1px dotted #777; }
    .selbg { position: absolute; left: 39px; top: 0; width: 69px; height: 16px; background: #d9d9d9; z-index: -1; }
    .tog { width: 10px; flex: none; }
    .dot.h { display: block; width: 7px; height: 0; border-top: 1px dotted #777; flex: none; }
    .node .dot.child { width: 12px; }
    .vs { width: 16px; flex: none; display: flex; flex-direction: column; background: #f0f0f0; }
    .vs .end { height: 16px; display: flex; align-items: center; justify-content: center; flex: none; }
    .vs .track { flex: 1; position: relative; }
    .th { background: #c8c8c8; }
    .nv { margin-right: 2px; }
    .nv .th { height: 300px; }

    .split { flex: 1; min-width: 0; display: flex; flex-direction: column; }
    .tb2 { height: 28px; display: flex; align-items: center; gap: 7px; margin-left: 6px; padding-left: 3px; background: linear-gradient(#fafafa, #ececec); white-space: nowrap; flex: none; }
    .tb2 .sep { height: 18px; margin: 0 -4px 0 0; }
    .tb2 .arr { margin-left: -1px; }
    .tb2 .x { margin-left: -2px; }
    .tb2 .find { margin-left: 4px; }
    .combo3 { width: 60px; height: 22px; background: #fff; display: flex; align-items: center; justify-content: space-between; padding: 0 2px 0 2px; box-sizing: border-box; margin-left: -2px; }
    .work { flex: 1; min-height: 0; display: flex; }
    .comp { width: 183px; margin-left: 5px; flex: none; display: flex; flex-direction: column; }
    .srow { height: 30px; display: flex; align-items: center; gap: 5px; flex: none; padding-top: 3px; box-sizing: border-box; }
    .sbox { width: 158px; height: 23px; background: #fff; border: 1px solid #999; border-bottom-color: #ccc; box-sizing: border-box; color: #777; padding-left: 2px; line-height: 21px; }
    .ctree { flex: 1; min-height: 0; height: 563px; border-width: 1px 2px 2px; }
    .clist { position: absolute; left: 0; top: 0; right: 16px; bottom: 18px; overflow: hidden; padding-top: 1px; isolation: isolate; }
    .croot { height: 16px; display: flex; align-items: center; padding-left: 5px; gap: 3px; margin-top: 1px; }
    .croot .ic { margin-left: 5px; margin-right: 2px; }
    .croot .tog { margin-right: -2px; }
    .cn { height: 16px; display: flex; align-items: center; padding-left: 31px; white-space: nowrap; position: relative; }
    .cn::before { content: ""; position: absolute; left: 31px; top: -8px; height: 16px; border-left: 1px dotted #777; }
    .cn .dot { width: 10px; }
    .cn .ic { width: 14px; height: 14px; margin-right: 5px; }
    .cn .lb { padding-left: 2px; line-height: 16px; }
    .cn .lb.hl { background: #316ac5; margin-left: -21px; padding: 0 4px 0 23px; z-index: -1; position: relative; }
    .cv { position: absolute; right: 0; top: 0; bottom: 18px; }
    .cv .th { height: 192px; }
    .hs { position: absolute; left: 0; right: 0; bottom: 0; height: 18px; background: #f0f0f0; display: flex; align-items: center; padding: 0 8px; }
    .hs span { width: 10px; display: flex; }
    .hs .chev { width: 6px; height: 10px; }
    .hth { width: 92px; height: 16px; background: #c8c8c8; margin-left: 6px; }
    .he { margin-left: auto; }

    .props { flex: 1; min-width: 0; margin-left: 4px; margin-right: 4px; display: flex; flex-direction: column; background: #fff; }
    .tab { width: 65px; height: 21px; background: #fff; border: 1px solid #ccc; border-bottom: 0; box-sizing: border-box; text-align: center; line-height: 20px; flex: none; margin-top: 1px; }
    .body { flex: 1; background: #fff; border-top: 1px solid #ccc; display: flex; justify-content: space-between; padding-left: 5px; min-height: 0; }
    .grid { width: 369px; margin-top: 2px; border-left: 1px solid #bbb; border-top: 1px solid #bbb; align-self: flex-start; }
    .row { display: grid; grid-template-columns: 21px 191px 126px 31px; height: 19px; }
    .row.head { height: 23px; }
    .c { border-right: 1px solid #bbb; border-bottom: 1px solid #bbb; box-sizing: border-box; line-height: 20px; white-space: nowrap; overflow: hidden; position: relative; }
    .c .la { line-height: 18px; }
    .n { background: linear-gradient(#fafafa, #e9e9e9); text-align: center; }
    .nm { padding-left: 20px; }
    .vl { padding-left: 2px; }
    .ad { display: flex; align-items: center; justify-content: center; }
    .cb { width: 11px; height: 11px; border: 1px solid #333; background: #fff; display: block; }
    .head .c { line-height: 21px; text-align: center; background: linear-gradient(#fff, #ececec); padding: 0; }
    .head .vl { background: linear-gradient(#fcdda2, #f2bf60); color: #7a0a7a; }
    .row.b .nm { color: #0000e6; }
    .row.g .nm, .row.g .vl { color: #8a8a8a; }
    .row.s .n { background: #ffd28a; color: #7a0a7a; }
    .row.s .nm { background: #0078d7; color: #fff; }
    .row.s .vl { background: #d6e8f7; }
    .row.sub .nm { padding-left: 30px; }
    .row.sub .nm::before { content: ""; position: absolute; left: 8px; top: 0; bottom: 0; border-left: 1px solid #aaa; }
    .row.sub .nm::after { content: ""; position: absolute; left: 8px; top: 9px; width: 16px; border-top: 1px solid #aaa; }
    .row.last .nm::before { bottom: 9px; }
    .ex { position: absolute; left: 2px; top: 3px; width: 11px; height: 11px; border: 1px solid #999; font: 12px/10px "Liberation Sans", sans-serif; color: #111; text-align: center; background: #fff; }
    .rv { width: 14px; margin-right: 3px; margin-top: 4px; }
    .rv .th { height: 300px; }

    .status { height: 20px; margin-top: 4px; display: flex; gap: 2px; }
    .st { background: #f5f5f5; border: 1px solid #ddd; box-sizing: border-box; line-height: 18px; padding-left: 2px; white-space: nowrap; }
    .s0 { width: 148px; }
    .s1 { width: 78px; }
    .s2 { width: 98px; }
    .s3 { width: 48px; }
    .s4 { width: 913px; }
    .s5 { flex: 1; }

    .taskbar { height: 40px; background: #04101a; display: flex; align-items: center; color: #fff; position: relative; }
    .start { width: 48px; height: 40px; background: #000; display: flex; align-items: center; justify-content: center; flex: none; }
    .start svg { width: 16px; height: 16px; }
    .sbar { width: 344px; height: 40px; background: #333; display: flex; align-items: center; color: #8a8a8a; font-size: 13px; flex: none; }
    .cortana { width: 14px; height: 14px; border: 3px solid #e8e8e8; border-radius: 50%; margin-left: 10px; margin-right: 6px; display: block; }
    .mic { width: 11px; height: 18px; margin-left: auto; margin-right: 15px; }
    .slot { height: 40px; display: flex; align-items: center; justify-content: center; flex: none; position: relative; }
    .slot svg { width: 23px; height: 23px; }
    .w50 { width: 50px; }
    .w36 { width: 36px; }
    .w35 { width: 35px; }
    .w34 { width: 34px; }
    .w41 { width: 41px; }
    .g6 { margin-right: 6px; }
    .g4 { margin-right: 4px; }
    .g3l { margin-left: 3px; }
    .g8 { margin-right: 8px; }
    .act { background: #3a4246; }
    .u::after { content: ""; position: absolute; left: 1px; right: 1px; bottom: 0; height: 2px; background: #7fbdf0; }
    .act.u::after { left: 0; right: 0; }
    .link { margin-left: 17px; color: #ddd; }
    .cpu { margin-left: 21px; display: flex; flex-direction: column; align-items: center; line-height: 17px; width: 48px; }
    .tray { flex: none; }
    .t1 { width: 12px; height: 8px; margin-left: 20px; }
    .t2 { width: 15px; height: 15px; margin-left: 10px; }
    .t3 { width: 14px; height: 14px; margin-left: 13px; }
    .t4 { width: 15px; height: 15px; margin-left: 8px; }
    .t5 { width: 22px; height: 14px; margin-left: 8px; }
    .zh { margin-left: 12px; font-size: 12px; }
    .clock { width: 52px; margin-left: 20px; display: flex; flex-direction: column; align-items: center; line-height: 17px; }
    .notif { width: 16px; height: 16px; margin-left: 23px; }
    .sg { display: block; width: 26px; height: 24px; background: #f0401a; color: #fff; font: 700 22px/24px "Liberation Sans", sans-serif; text-align: center; border-radius: 6px; transform: rotate(-8deg); flex: none; }
    .sg.small { width: 15px; height: 17px; font-size: 14px; line-height: 17px; border-radius: 3px; margin-left: 14px; }

    .under { position: absolute; left: 0; top: 0; width: 0; height: 0; }
    .dlg { position: absolute; left: 823px; top: 133px; width: 521px; height: 569px; box-sizing: border-box; border: 1px solid #444; background: linear-gradient(#9db8d5, #b9d1e8 30px); display: flex; flex-direction: column; padding: 0 7px; }
    .dtitle { height: 29px; line-height: 36px; color: #222; flex: none; }
    .dframe { background: #f6f6f6; border: 1px solid #e4e4e4; flex: none; height: 508px; padding: 3px 3px 2px 4px; box-sizing: border-box; display: flex; flex-direction: column; }
    .dbar { height: 31px; display: flex; align-items: center; gap: 10px; padding-left: 3px; flex: none; background: linear-gradient(#f8f8f8, #efefef); white-space: nowrap; }
    .dbar > .sep { margin: 0 -2px; }
    .dbar.r2 { height: 28px; gap: 1px; }
    .dbar.r2 .grip { margin-right: 5px; }
    .grip { width: 0; height: 18px; border-left: 2px dotted #aaa; display: block; margin-right: -3px; }
    .dbar .on, .fbody .on { background: #d5e6f6; border: 1px solid #0078d7; padding: 2px 4px; margin: 0 -5px; line-height: 16px; }
    .rc { width: 135px; height: 25px; border: 1px solid #0078d7; background: #fff; box-sizing: border-box; font: 13px/23px "Liberation Sans", sans-serif; padding-left: 3px; display: flex; justify-content: space-between; }
    .rc u { width: 11px; background: #d5e6f6; display: flex; align-items: center; justify-content: center; text-decoration: none; }
    .rc .arr { margin: 0; }
    .canvas { flex: 1; min-height: 0; background: #000; border: 2px solid #f00; box-sizing: border-box; position: relative; overflow: hidden; }
    .cad { position: absolute; left: -2px; top: -2px; width: 496px; height: 442px; display: block; }
    .dstat { display: flex; gap: 3px; height: 20px; margin-top: 4px; flex: none; }
    .xy { width: 147px; background: #f2f2f2; border: 1px solid #ddd; box-sizing: border-box; padding-left: 7px; line-height: 18px; }
    .msg { flex: 1; min-width: 0; background: #f6f6f6; border: 1px solid #ddd; box-sizing: border-box; overflow: hidden; white-space: nowrap; line-height: 18px; padding-left: 1px; }
    .float { position: absolute; left: 847px; top: 230px; width: 233px; height: 54px; border: 1px solid #666; box-sizing: border-box; background: #f4f4f4; }
    .ftop { height: 7px; background: #fff; }
    .ftitle { height: 21px; background: #a0a0a0; color: #f0f0f0; line-height: 21px; padding-left: 2px; }
    .fbody { display: flex; gap: 10px; align-items: center; height: 24px; padding-left: 4px; white-space: nowrap; }
    .mark { position: absolute; border: 3px solid #f00; box-sizing: border-box; display: block; }
    .m1 { left: 351px; top: 194px; width: 366px; height: 50px; }
    .m2 { left: 930px; top: 159px; width: 69px; height: 40px; }
    .m3 { left: 903px; top: 245px; width: 73px; height: 49px; }
    .badge { position: absolute; left: 1008px; top: -27px; width: 46px; height: 46px; border-radius: 50%; background: #3cb54a; box-shadow: 0 1px 2px 1px #aaa; color: #fff; font: 700 12px/12px "Liberation Sans", sans-serif; text-align: center; }
    .badge span { display: block; padding-top: 29px; }
    .ime { position: absolute; left: 736px; top: 14px; display: flex; align-items: center; }
    .imebar { width: 173px; height: 23px; margin-left: 8px; background: #f2f7fc; border: 1px solid #a8bcd0; box-sizing: border-box; display: flex; align-items: center; gap: 6px; padding-left: 0; color: #1a6fc4; }
    .imebar b { font: 700 14px/16px "Noto Sans CJK SC", sans-serif; }
    .imebar b.pn { width: 16px; text-align: center; letter-spacing: 1px; }
    .imebar svg { width: 16px; height: 16px; flex: none; }
    .ime .sg { z-index: 1; }
  `;
}

declare global {
  interface HTMLElementTagNameMap {
    'app-root': AppRoot;
  }
}
